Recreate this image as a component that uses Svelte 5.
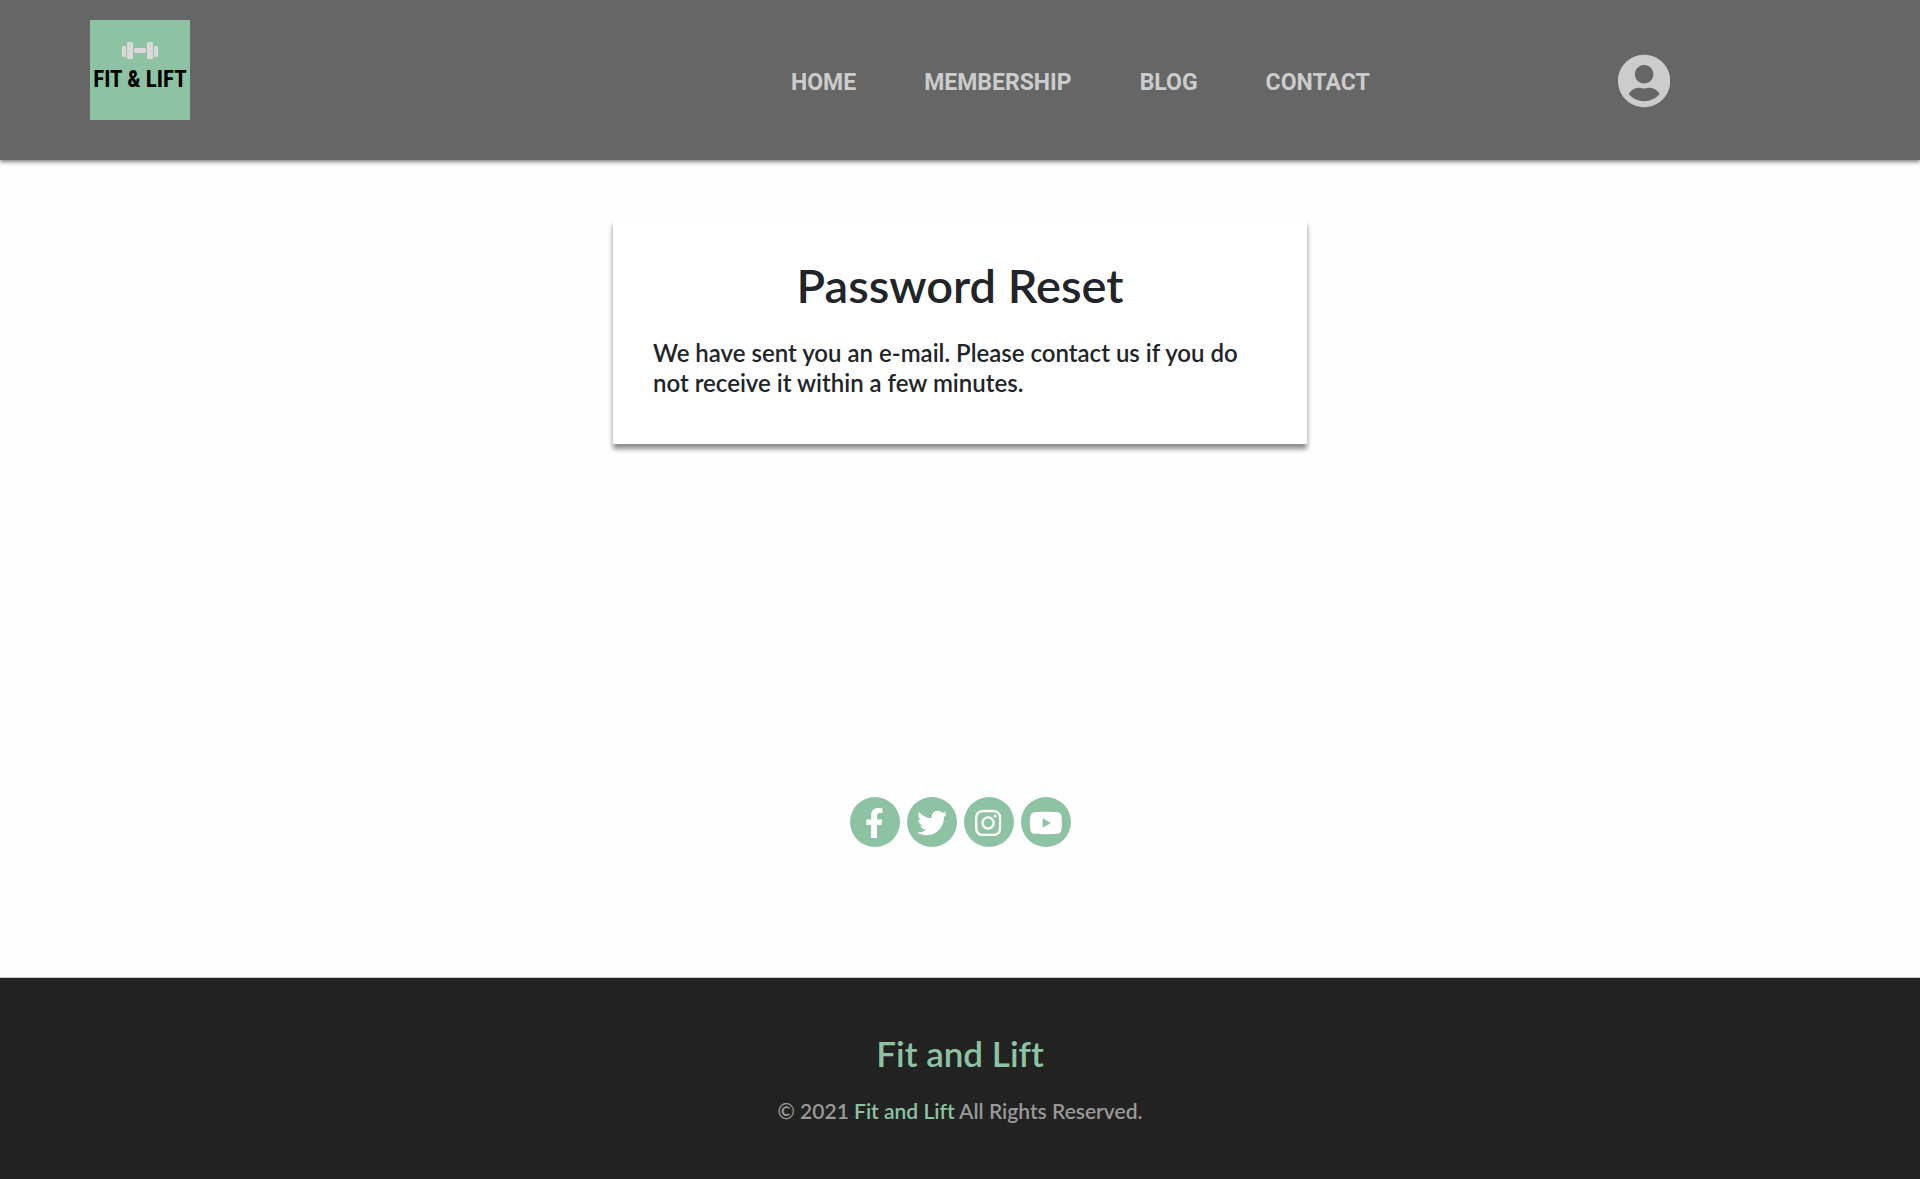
<script>
  const links = ['HOME', 'MEMBERSHIP', 'BLOG', 'CONTACT'];
  const socials = [
    { name: 'Facebook', box: '0 0 320 512', d: 'M279.14 288l14.22-92.66h-88.91v-60.13c0-25.35 12.42-50.06 52.24-50.06h40.42V6.26S260.43 0 225.36 0c-73.22 0-121.08 44.38-121.08 124.72v70.62H22.89V288h81.39v224h100.17V288z' },
    { name: 'Twitter', box: '0 0 512 512', d: 'M459.37 151.716c.325 4.548.325 9.097.325 13.645 0 138.72-105.583 298.558-298.558 298.558-59.452 0-114.68-17.219-161.137-47.106 8.447.974 16.568 1.299 25.34 1.299 49.055 0 94.213-16.568 130.274-44.832-46.132-.975-84.792-31.188-98.112-72.772 6.498.974 12.995 1.624 19.818 1.624 9.421 0 18.843-1.3 27.614-3.573-48.081-9.747-84.143-51.98-84.143-102.985v-1.299c13.969 7.797 30.214 12.67 47.431 13.319-28.264-18.843-46.781-51.005-46.781-87.391 0-19.492 5.197-37.36 14.294-52.954 51.655 63.675 129.3 105.258 216.365 109.807-1.624-7.797-2.599-15.918-2.599-24.04 0-57.828 46.782-104.934 104.934-104.934 30.213 0 57.502 12.67 76.67 33.137 23.715-4.548 46.456-13.32 66.599-25.34-7.798 24.366-24.366 44.833-46.132 57.827 21.117-2.273 41.584-8.122 60.426-16.243-14.292 20.791-32.161 39.308-52.628 54.253z' },
    { name: 'Instagram', box: '0 0 448 512', d: 'M224.1 141c-63.6 0-114.9 51.3-114.9 114.9s51.3 114.9 114.9 114.9S339 319.5 339 255.9 287.7 141 224.1 141zm0 189.6c-41.1 0-74.7-33.5-74.7-74.7s33.5-74.7 74.7-74.7 74.7 33.5 74.7 74.7-33.6 74.7-74.7 74.7zm146.4-194.3c0 14.9-12 26.8-26.8 26.8-14.9 0-26.8-12-26.8-26.8s12-26.8 26.8-26.8 26.8 12 26.8 26.8zm76.1 27.2c-1.7-35.9-9.9-67.7-36.2-93.9-26.2-26.2-58-34.4-93.9-36.2-37-2.1-147.9-2.1-184.9 0-35.8 1.7-67.6 9.9-93.9 36.1s-34.4 58-36.2 93.9c-2.1 37-2.1 147.9 0 184.9 1.7 35.9 9.9 67.7 36.2 93.9s58 34.4 93.9 36.2c37 2.1 147.9 2.1 184.9 0 35.9-1.7 67.7-9.9 93.9-36.2 26.2-26.2 34.4-58 36.2-93.9 2.1-37 2.1-147.8 0-184.8zM398.8 388c-7.8 19.6-22.9 34.7-42.6 42.6-29.5 11.7-99.5 9-132.1 9s-102.7 2.6-132.1-9c-19.6-7.8-34.7-22.9-42.6-42.6-11.7-29.5-9-99.5-9-132.1s-2.6-102.7 9-132.1c7.8-19.6 22.9-34.7 42.6-42.6 29.5-11.7 99.5-9 132.1-9s102.7-2.6 132.1 9c19.6 7.8 34.7 22.9 42.6 42.6 11.7 29.5 9 99.5 9 132.1s2.7 102.7-9 132.1z' },
    { name: 'YouTube', box: '0 0 576 512', d: 'M549.655 124.083c-6.281-23.65-24.787-42.276-48.284-48.597C458.781 64 288 64 288 64S117.22 64 74.629 75.486c-23.497 6.322-42.003 24.947-48.284 48.597-11.412 42.867-11.412 132.305-11.412 132.305s0 89.438 11.412 132.305c6.281 23.65 24.787 41.5 48.284 47.821C117.22 448 288 448 288 448s170.78 0 213.371-11.486c23.497-6.321 42.003-24.171 48.284-47.821 11.412-42.867 11.412-132.305 11.412-132.305s0-89.438-11.412-132.305zm-317.51 213.508V175.185l142.739 81.205-142.739 81.201z' }
  ];
</script>

<div class="page">
  <header>
    <a class="logo" href="/" aria-label="Fit & Lift home">
      <svg viewBox="0 0 100 100">
        <g fill="#d9d9d9">
          <rect x="32" y="26" width="4" height="11" rx="1" />
          <rect x="37" y="22" width="6" height="17" rx="1" />
          <rect x="44" y="28" width="12" height="5" rx="1" />
          <rect x="57" y="22" width="6" height="17" rx="1" />
          <rect x="64" y="26" width="4" height="11" rx="1" />
        </g>
        <text x="50" y="67" text-anchor="middle">FIT &amp; LIFT</text>
      </svg>
    </a>
    <nav aria-label="Main">
      {#each links as link}
        <a href="/{link.toLowerCase()}">{link}</a>
      {/each}
    </nav>
    <a class="account" href="/account" aria-label="Account">
      <svg viewBox="0 0 496 512"><path d="M248 8C111 8 0 119 0 256s111 248 248 248 248-111 248-248S385 8 248 8zm0 96c48.600 0 88 39.400 88 88s-39.400 88-88 88-88-39.400-88-88 39.400-88 88-88zm0 344c-58.700 0-111.300-26.600-146.500-68.200 18.800-35.400 55.600-59.800 98.500-59.800 2.400 0 4.800.4 7.100 1.100 13 4.200 26.600 6.900 40.900 6.900 14.300 0 28-2.700 40.900-6.900 2.300-.7 4.700-1.100 7.100-1.100 42.900 0 79.700 24.400 98.500 59.800C359.300 421.400 306.700 448 248 448z" /></svg>
    </a>
  </header>

  <main>
    <section class="card">
      <h1>Password Reset</h1>
      <p>We have sent you an e-mail. Please contact us if you do not receive it within a few minutes.</p>
    </section>
  </main>

  <div class="socials">
    {#each socials as s}
      <a href="/{s.name.toLowerCase()}" aria-label={s.name}>
        <svg viewBox={s.box}><path d={s.d} /></svg>
      </a>
    {/each}
  </div>

  <footer>
    <h2>Fit and Lift</h2>
    <p>© 2021 <a href="/">Fit and Lift</a> All Rights Reserved.</p>
  </footer>
</div>

<style>
  :global(body) {
    margin: 0;
    background: #fefefe;
  }
  .page {
    display: flex;
    flex-direction: column;
    min-height: 100vh;
    font-family: Lato, 'Open Sans', sans-serif;
    font-weight: 600;
    font-variant-ligatures: none;
    color: #212529;
  }
  a {
    text-decoration: none;
  }
  h1, h2, p {
    margin: 0;
  }
  header {
    display: flex;
    align-items: flex-start;
    padding: 20px 250px 40px 90px;
    background: #666;
    box-shadow: 0 2px 4px rgba(0, 0, 0, 0.5);
  }
  .logo {
    width: 100px;
    height: 100px;
    background: #8dc3a3;
  }
  svg {
    display: block;
  }
  .logo text {
    font: 700 23px 'Liberation Sans Narrow', 'Roboto Condensed', Roboto, sans-serif;
    fill: #000;
  }
  nav {
    display: flex;
    gap: 68px;
    margin: 47px 248px 0 auto;
    font: 700 23px/32px Roboto, sans-serif;
  }
  nav a {
    color: #ccc;
  }
  .account {
    margin-top: 34px;
  }
  .account svg {
    height: 54px;
    fill: #ccc;
  }
  main {
    padding: 60px 20px 353px;
  }
  .card {
    box-sizing: border-box;
    max-width: 694px;
    margin: 0 auto;
    padding: 40px;
    background: #fff;
    box-shadow: 0 5px 5px rgba(0, 0, 0, 0.45);
  }
  h1 {
    padding-bottom: 28px;
    font-size: 47px;
    font-weight: 600;
    line-height: 50px;
    text-align: center;
  }
  .card p {
    padding-bottom: 6px;
    font-size: 24px;
    line-height: 30px;
  }
  .socials {
    display: flex;
    justify-content: center;
    gap: 7px;
    padding-bottom: 130px;
  }
  .socials a {
    box-sizing: border-box;
    display: flex;
    justify-content: center;
    width: 50px;
    height: 50px;
    padding-top: 11px;
    border-radius: 50%;
    background: #8dc3a3;
  }
  .socials svg {
    height: 30px;
    fill: #fff;
  }
  footer {
    flex: 1;
    padding: 55px 20px 50px;
    border-top: 1px solid #ccc;
    background: #222;
    color: #999;
    text-align: center;
  }
  h2 {
    padding-bottom: 23px;
    color: #8dc3a3;
    font-size: 35px;
    font-weight: 600;
    line-height: 40px;
  }
  footer p {
    font-size: 21px;
    line-height: 30px;
  }
  footer a {
    color: #8dc3a3;
  }
</style>
